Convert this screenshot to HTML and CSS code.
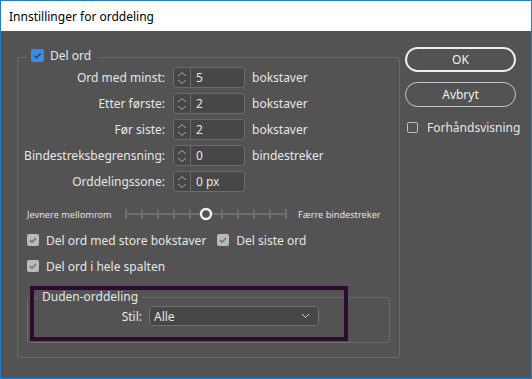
FILE: index.html
```html
<!DOCTYPE html>
<html lang="nb">
<head>
    <meta charset="UTF-8">
    <title>Innstillinger for orddeling</title>
    <link rel="stylesheet" href="styles.css">
</head>
<body>
    <div class="window">
        <div class="titlebar">Innstillinger for orddeling</div>
        <div class="dialog">
            <fieldset class="group main-group">
                <legend class="main-legend">
                    <span class="box box-on">
                        <svg width="13" height="13" viewBox="0 0 13 13"><path d="M3.5 6.8 L5.6 8.9 L9.6 4.4" fill="none" stroke="#274f7c" stroke-width="1.6"/></svg>
                    </span>
                    Del ord
                </legend>

                <div class="fields">
                    <span class="field-label">Ord med minst:</span>
                    <div class="spin">
                        <span class="spin-btn"><svg width="16" height="19" viewBox="0 0 16 19"><path d="M4 8 L8 4.5 L12 8 M4 12 L8 15.5 L12 12" fill="none" stroke="#a8a8a8" stroke-width="1"/></svg></span>
                        <span class="spin-value">5</span>
                    </div>
                    <span class="unit">bokstaver</span>

                    <span class="field-label">Etter første:</span>
                    <div class="spin">
                        <span class="spin-btn"><svg width="16" height="19" viewBox="0 0 16 19"><path d="M4 8 L8 4.5 L12 8 M4 12 L8 15.5 L12 12" fill="none" stroke="#a8a8a8" stroke-width="1"/></svg></span>
                        <span class="spin-value">2</span>
                    </div>
                    <span class="unit">bokstaver</span>

                    <span class="field-label">Før siste:</span>
                    <div class="spin">
                        <span class="spin-btn"><svg width="16" height="19" viewBox="0 0 16 19"><path d="M4 8 L8 4.5 L12 8 M4 12 L8 15.5 L12 12" fill="none" stroke="#a8a8a8" stroke-width="1"/></svg></span>
                        <span class="spin-value">2</span>
                    </div>
                    <span class="unit">bokstaver</span>

                    <span class="field-label">Bindestreksbegrensning:</span>
                    <div class="spin">
                        <span class="spin-btn"><svg width="16" height="19" viewBox="0 0 16 19"><path d="M4 8 L8 4.5 L12 8 M4 12 L8 15.5 L12 12" fill="none" stroke="#a8a8a8" stroke-width="1"/></svg></span>
                        <span class="spin-value">0</span>
                    </div>
                    <span class="unit">bindestreker</span>

                    <span class="field-label">Orddelingssone:</span>
                    <div class="spin">
                        <span class="spin-btn"><svg width="16" height="19" viewBox="0 0 16 19"><path d="M4 8 L8 4.5 L12 8 M4 12 L8 15.5 L12 12" fill="none" stroke="#a8a8a8" stroke-width="1"/></svg></span>
                        <span class="spin-value">0 px</span>
                    </div>
                    <span class="unit"></span>
                </div>

                <div class="slider">
                    <span class="slider-label slider-left">Jevnere mellomrom</span>
                    <svg class="track" width="162" height="14" viewBox="0 0 162 14">
                        <g stroke="#6e6e6e" stroke-width="2">
                            <line x1="1" y1="7" x2="161" y2="7"/>
                            <line x1="1" y1="2" x2="1" y2="12"/>
                            <line x1="17" y1="2" x2="17" y2="12"/>
                            <line x1="33" y1="2" x2="33" y2="12"/>
                            <line x1="49" y1="2" x2="49" y2="12"/>
                            <line x1="65" y1="2" x2="65" y2="12"/>
                            <line x1="97" y1="2" x2="97" y2="12"/>
                            <line x1="113" y1="2" x2="113" y2="12"/>
                            <line x1="129" y1="2" x2="129" y2="12"/>
                            <line x1="145" y1="2" x2="145" y2="12"/>
                            <line x1="161" y1="2" x2="161" y2="12"/>
                        </g>
                        <circle cx="81" cy="7" r="5" fill="#535353" stroke="#f2f2f2" stroke-width="2.4"/>
                    </svg>
                    <span class="slider-label">Færre bindestreker</span>
                </div>

                <div class="checks">
                    <div class="check-row">
                        <label class="check">
                            <span class="box box-grey"><svg width="12" height="12" viewBox="0 0 12 12"><path d="M3 6.2 L5 8.2 L9 3.9" fill="none" stroke="#6f6f6f" stroke-width="1.5"/></svg></span>
                            Del ord med store bokstaver
                        </label>
                        <label class="check">
                            <span class="box box-grey"><svg width="12" height="12" viewBox="0 0 12 12"><path d="M3 6.2 L5 8.2 L9 3.9" fill="none" stroke="#6f6f6f" stroke-width="1.5"/></svg></span>
                            Del siste ord
                        </label>
                    </div>
                    <div class="check-row">
                        <label class="check">
                            <span class="box box-grey"><svg width="12" height="12" viewBox="0 0 12 12"><path d="M3 6.2 L5 8.2 L9 3.9" fill="none" stroke="#6f6f6f" stroke-width="1.5"/></svg></span>
                            Del ord i hele spalten
                        </label>
                    </div>
                </div>

                <fieldset class="group duden">
                    <legend class="duden-legend">Duden-orddeling</legend>
                    <div class="style-row">
                        <span class="style-label">Stil:</span>
                        <div class="select">
                            <span>Alle</span>
                            <svg width="9" height="6" viewBox="0 0 9 6"><path d="M1 1 L4.5 4.5 L8 1" fill="none" stroke="#cfcfcf" stroke-width="1"/></svg>
                        </div>
                    </div>
                </fieldset>
            </fieldset>

            <div class="actions">
                <button class="btn btn-default">OK</button>
                <button class="btn">Avbryt</button>
                <label class="check preview">
                    <span class="box box-empty"></span>
                    Forhåndsvisning
                </label>
            </div>
        </div>
        <div class="highlight"></div>
    </div>
</body>
</html>
```

FILE: styles.css
```css
* {
    box-sizing: border-box;
}

body {
    margin: 0;
    background: #535353;
}

.window {
    position: relative;
    width: 532px;
    height: 379px;
    border: 1px solid #1a7fd4;
    background: #535353;
    font-family: "Noto Sans", sans-serif;
    font-size: 12px;
    color: #e6e6e6;
    display: flex;
    flex-direction: column;
}

.titlebar {
    height: 30px;
    background: #fff;
    color: #000;
    padding-left: 8px;
    display: flex;
    align-items: center;
    flex-shrink: 0;
}

.dialog {
    display: flex;
    padding: 16px 15px 0 16px;
    gap: 5px;
}

.group {
    margin: 0;
    padding: 0;
    border: 1px solid #6b6b6b;
    border-radius: 3px;
    min-width: 0;
}

.main-group {
    width: 383px;
    height: 309px;
    margin-top: 2px;
}

.main-legend {
    display: flex;
    align-items: flex-start;
    gap: 6px;
    height: 16px;
    margin-left: 9px;
    padding: 0 7px 0 4px;
    line-height: 14px;
}

.box {
    display: inline-flex;
    flex-shrink: 0;
    width: 12px;
    height: 12px;
    border-radius: 2px;
}

.box-on {
    width: 13px;
    height: 13px;
    background: #3a8de4;
}

.box-grey {
    background: #b9b9b9;
}

.box-empty {
    width: 11px;
    height: 11px;
    border: 1px solid #bdbdbd;
}

/* number fields */
.fields {
    display: grid;
    grid-template-columns: 148px 72px 1fr;
    column-gap: 7px;
    row-gap: 5px;
    padding-top: 2px;
    align-items: center;
}

.field-label {
    text-align: right;
    padding-right: 1px;
}

.spin {
    display: flex;
    height: 21px;
    border: 1px solid #6c6c6c;
    border-radius: 3px;
    background: #474747;
}

.spin-btn {
    width: 17px;
    border-right: 1px solid #6c6c6c;
    display: flex;
}

.spin-value {
    padding-left: 5px;
    line-height: 19px;
}

/* slider */
.slider {
    display: flex;
    align-items: center;
    height: 14px;
    margin-top: 15px;
    padding-left: 9px;
    font-size: 9.2px;
    color: #e0e0e0;
}

.slider-left {
    width: 84px;
    white-space: nowrap;
}

.track {
    margin: 0 11px 0 14px;
}

/* checkboxes */
.checks {
    margin-top: 11px;
    padding-left: 9px;
    display: flex;
    flex-direction: column;
    gap: 10px;
}

.check-row {
    display: flex;
    gap: 11px;
}

.check {
    display: flex;
    align-items: center;
    gap: 7px;
    height: 16px;
}

/* duden */
.duden {
    width: 363px;
    height: 54px;
    margin: 15px 0 0 9px;
}

.duden-legend {
    height: 16px;
    line-height: 16px;
    margin-left: 10px;
    padding: 0 4px;
}

.style-row {
    display: flex;
    align-items: center;
    gap: 7px;
    margin-top: 1px;
}

.style-label {
    width: 114px;
    text-align: right;
}

.select {
    width: 170px;
    height: 20px;
    border: 1px solid #727272;
    border-radius: 3px;
    background: #474747;
    display: flex;
    align-items: center;
    justify-content: space-between;
    padding: 0 8px 0 4px;
}

/* buttons */
.actions {
    width: 111px;
    display: flex;
    flex-direction: column;
    gap: 10px;
}

.btn {
    height: 25px;
    border-radius: 13px;
    border: 1px solid #c8c8c8;
    background: transparent;
    color: #f0f0f0;
    font-family: inherit;
    font-size: 12px;
    padding: 0;
}

.btn-default {
    border: 2px solid #ededed;
}

.preview {
    margin-top: 5px;
    padding-left: 2px;
    gap: 9px;
    height: 11px;
}

.highlight {
    position: absolute;
    left: 29px;
    top: 285px;
    width: 318px;
    height: 55px;
    border: 4px solid #2c0b2f;
}
```
